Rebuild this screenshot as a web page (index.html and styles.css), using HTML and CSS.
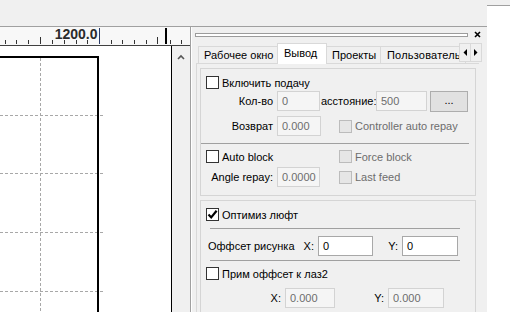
FILE: index.html
```html
<!DOCTYPE html>
<html lang="ru">
<head>
  <meta charset="UTF-8">
  <title>Вывод</title>
  <link rel="stylesheet" href="styles.css">
</head>
<body>
  <div class="screen">
    <div class="app">
      <div class="topbar"></div>
      <div class="main">
        <!-- drawing area with ruler -->
        <div class="work">
          <div class="ruler">
            <svg width="190" height="18" viewBox="0 0 190 18">
              <g stroke="#333" stroke-width="1">
                <line x1="5.5" y1="13" x2="5.5" y2="17"/>
                <line x1="16.5" y1="13" x2="16.5" y2="17"/>
                <line x1="28.5" y1="13" x2="28.5" y2="17"/>
                <line x1="40.5" y1="10" x2="40.5" y2="17"/>
                <line x1="52.5" y1="13" x2="52.5" y2="17"/>
                <line x1="64.5" y1="13" x2="64.5" y2="17"/>
                <line x1="76.5" y1="13" x2="76.5" y2="17"/>
                <line x1="87.5" y1="13" x2="87.5" y2="17"/>
                <line x1="99.5" y1="1" x2="99.5" y2="17" stroke="#2a3a66"/>
                <line x1="111.5" y1="13" x2="111.5" y2="17"/>
                <line x1="122.5" y1="13" x2="122.5" y2="17"/>
                <line x1="134.5" y1="13" x2="134.5" y2="17"/>
                <line x1="146.5" y1="13" x2="146.5" y2="17"/>
                <line x1="157.5" y1="10" x2="157.5" y2="17"/>
                <line x1="170.5" y1="13" x2="170.5" y2="17"/>
                <line x1="181.5" y1="13" x2="181.5" y2="17"/>
              </g>
              <line x1="166" y1="1" x2="166" y2="17" stroke="#000" stroke-width="2"/>
              <text x="97.5" y="11.5" text-anchor="end" class="ruler-label">1200.0</text>
            </svg>
          </div>
          <div class="view">
            <div class="canvas">
              <svg width="171" height="266" viewBox="0 0 171 266">
                <g stroke="#a8a8a8" stroke-width="1" stroke-dasharray="3 2">
                  <line x1="40.5" y1="12" x2="40.5" y2="266"/>
                  <line x1="0" y1="69.5" x2="104" y2="69.5"/>
                  <line x1="0" y1="127.5" x2="104" y2="127.5"/>
                  <line x1="0" y1="186.5" x2="104" y2="186.5"/>
                  <line x1="0" y1="245.5" x2="104" y2="245.5"/>
                </g>
                <polyline points="0,11 98,11 98,266" fill="none" stroke="#000" stroke-width="2"/>
              </svg>
            </div>
            <div class="vscroll">
              <svg width="18" height="18" viewBox="0 0 18 18">
                <polyline points="6,11 9,8 12,11" fill="none" stroke="#555" stroke-width="1.6"/>
              </svg>
            </div>
          </div>
        </div>

        <!-- docked settings panel -->
        <div class="dock">
          <div class="dock-title">
            <div class="gripper"></div>
            <svg class="close" width="7" height="7" viewBox="0 0 7 7">
              <path d="M1 1 L6 6 M6 1 L1 6" stroke="#000" stroke-width="1.6"/>
            </svg>
          </div>

          <div class="tabs">
            <div class="tab tab-work">Рабочее окно</div>
            <div class="tab tab-active">Вывод</div>
            <div class="tab tab-proj">Проекты</div>
            <div class="tab tab-user">Пользователь</div>
            <div class="tab-arrows">
              <div class="arrow-btn">
                <svg width="4" height="7" viewBox="0 0 4 7"><path d="M4 0 L0.5 3.5 L4 7 Z" fill="#000"/></svg>
              </div>
              <div class="arrow-btn">
                <svg width="4" height="7" viewBox="0 0 4 7"><path d="M0 0 L3.5 3.5 L0 7 Z" fill="#000"/></svg>
              </div>
            </div>
          </div>

          <div class="pane">
            <div class="group group-feed">
              <div class="row row-check">
                <span class="check"></span>
                <span class="check-label">Включить подачу</span>
              </div>
              <div class="row row-field">
                <span class="label">Кол-во</span>
                <span class="input input-off w43">0</span>
                <span class="label-inline">асстояние:</span>
                <span class="input input-off w51">500</span>
                <span class="btn">...</span>
              </div>
              <div class="row row-field row-gap">
                <span class="label">Возврат</span>
                <span class="input input-off w44">0.000</span>
                <span class="check check-off ml18"></span>
                <span class="check-label off">Controller auto repay</span>
              </div>
              <div class="sep sep-wide"></div>
              <div class="row row-check row-after-sep">
                <span class="check-cell">
                  <span class="check"></span>
                  <span class="check-label">Auto block</span>
                </span>
                <span class="check check-off"></span>
                <span class="check-label off">Force block</span>
              </div>
              <div class="row row-field row-last">
                <span class="label">Angle repay:</span>
                <span class="input input-off w43">0.0000</span>
                <span class="check check-off ml19"></span>
                <span class="check-label off">Last feed</span>
              </div>
            </div>

            <div class="group group-offset">
              <div class="row row-check">
                <span class="check on">
                  <svg width="11" height="11" viewBox="0 0 11 11"><path d="M1.5 5.5 L4.2 8.4 L9.6 1.8" fill="none" stroke="#000" stroke-width="2.2"/></svg>
                </span>
                <span class="check-label">Оптимиз люфт</span>
              </div>
              <div class="sep sep-short"></div>
              <div class="row row-offset">
                <span class="offset-label"><span>Оффсет рисунка</span><span>X:</span></span>
                <span class="input w55">0</span>
                <span class="axis axis-y">Y:</span>
                <span class="input w56">0</span>
              </div>
              <div class="sep sep-short sep-tight"></div>
              <div class="row row-check row-after-sep">
                <span class="check"></span>
                <span class="check-label">Прим оффсет к лаз2</span>
              </div>
              <div class="row row-laser">
                <span class="axis axis-x2">X:</span>
                <span class="input input-off w50">0.000</span>
                <span class="axis axis-y2">Y:</span>
                <span class="input input-off w56">0.000</span>
              </div>
            </div>
          </div>
        </div>
      </div>
    </div>
    <div class="side"></div>
  </div>
</body>
</html>
```

FILE: styles.css
```css
body {
  margin: 0;
  padding: 0;
  background-color: #f0f0f0;
  font-family: 'Liberation Sans', Arial, sans-serif;
  font-size: 11px;
  color: #000000;
}

.screen {
  display: flex;
  width: 510px;
  height: 312px;
  overflow: hidden;
}

.app {
  width: 487px;
  display: flex;
  flex-direction: column;
}

.side {
  width: 23px;
  margin-top: 5px;
  background-color: #ffffff;
  border-top: 1px solid #a0a0a0;
}

.topbar {
  height: 26px;
  flex-shrink: 0;
}

.main {
  flex: 1;
  display: flex;
  border-top: 1px solid #a0a0a0;
  min-height: 0;
}

/* Work area */
.work {
  width: 190px;
  border-right: 1px solid #a0a0a0;
  display: flex;
  flex-direction: column;
}

.ruler {
  height: 18px;
  flex-shrink: 0;
  background-color: #f8f8f8;
  border-bottom: 1px solid #404040;
}

.ruler svg {
  display: block;
}

.ruler-label {
  font-family: 'Liberation Sans', Arial, sans-serif;
  font-weight: bold;
  font-size: 14px;
  fill: #2b2b2b;
}

.view {
  flex: 1;
  display: flex;
  min-height: 0;
}

.canvas {
  width: 171px;
  background-color: #ffffff;
  border-right: 1px solid #000000;
  overflow: hidden;
}

.canvas svg,
.vscroll svg {
  display: block;
}

.vscroll {
  width: 18px;
  background-color: #f0f0f0;
  padding-top: 2px;
}

/* Dock panel */
.dock {
  width: 295px;
  border-left: 1px solid #ffffff;
  display: flex;
  flex-direction: column;
  min-height: 0;
}

.dock-title {
  height: 15px;
  flex-shrink: 0;
  display: flex;
  align-items: center;
  padding: 0 6px 0 3px;
}

.gripper {
  flex: 1;
  height: 2px;
  background-color: #ffffff;
  border: 1px solid #9c9c9c;
  margin-right: 6px;
}

.close {
  display: block;
}

.tabs {
  height: 21px;
  flex-shrink: 0;
  display: flex;
  align-items: flex-end;
  padding-left: 6px;
}

.tab {
  box-sizing: border-box;
  height: 17px;
  border: 1px solid #d9d9d9;
  border-bottom: none;
  background-color: #f0f0f0;
  margin-right: -1px;
  padding: 0 5px;
  line-height: 16px;
  white-space: nowrap;
  overflow: hidden;
}

.tab-work {
  width: 80px;
}

.tab-active {
  width: 50px;
  height: 21px;
  background-color: #ffffff;
  line-height: 18px;
  position: relative;
  z-index: 1;
  margin-bottom: -1px;
  padding: 0 6px;
}

.tab-proj {
  width: 55px;
}

.tab-user {
  width: 86px;
  padding-left: 6px;
  letter-spacing: 0.2px;
}

/* scroll buttons sit over the end of the last tab */
.tab-arrows {
  display: flex;
  position: relative;
  z-index: 2;
  margin-left: -6px;
  margin-bottom: 1px;
  height: 17px;
  border: 1px solid #d9d9d9;
  background-color: #f0f0f0;
}

.arrow-btn {
  width: 10px;
  display: flex;
  align-items: center;
  justify-content: center;
}

.arrow-btn + .arrow-btn {
  border-left: 1px solid #d9d9d9;
}

.pane {
  flex: 1;
  min-height: 0;
  overflow: hidden;
  box-sizing: border-box;
  margin-left: 4px;
  width: 283px;
  border: 1px solid #d9d9d9;
  border-right: none;
  border-bottom: none;
  padding: 4px 3px 0 3px;
}

.group {
  border: 1px solid #d5d5d5;
}

.group-feed {
  padding-bottom: 8px;
}

.group-offset {
  margin-top: 4px;
  height: 120px;
}

.row {
  display: flex;
  align-items: center;
}

.row-check {
  height: 13px;
  margin-top: 7px;
  padding-left: 5px;
}

.row-after-sep {
  margin-top: 6px;
}

.row-field {
  height: 20px;
  margin-top: 2px;
}

.row-gap {
  margin-top: 5px;
}

.row-last {
  margin-top: 4px;
}

.check {
  box-sizing: border-box;
  width: 13px;
  height: 13px;
  border: 1px solid #333333;
  background-color: #ffffff;
  display: flex;
  align-items: center;
  justify-content: center;
  flex-shrink: 0;
}

.check-off {
  border-color: #bcbcbc;
  background-color: #e6e6e6;
}

.check-label {
  margin-left: 3px;
  white-space: nowrap;
}

.check-label.off {
  color: #6d6d6d;
}

.check-cell {
  width: 133px;
  display: flex;
  align-items: center;
}

.ml18 {
  margin-left: 18px;
}

.ml19 {
  margin-left: 19px;
}

.label {
  width: 72px;
  text-align: right;
  margin-right: 4px;
  white-space: nowrap;
}

.label-inline {
  width: 56px;
  padding-left: 1px;
  box-sizing: border-box;
  white-space: nowrap;
}

.input {
  box-sizing: border-box;
  height: 20px;
  border: 1px solid #a8a8a8;
  background-color: #ffffff;
  padding-left: 4px;
  line-height: 18px;
}

.input-off {
  border-color: #d3d3d3;
  background-color: #f5f5f5;
  color: #6d6d6d;
}

.w43 { width: 43px; }
.w44 { width: 44px; }
.w50 { width: 50px; }
.w51 { width: 51px; }
.w55 { width: 55px; }
.w56 { width: 56px; }

.btn {
  box-sizing: border-box;
  width: 38px;
  height: 21px;
  margin-left: 3px;
  border: 1px solid #adadad;
  background-color: #e1e1e1;
  text-align: center;
  line-height: 17px;
}

.sep {
  height: 1px;
  background-color: #a0a0a0;
}

.sep-wide {
  margin: 7px 6px 0 0;
}

.sep-short {
  margin: 7px 15px 0 9px;
}

.sep-tight {
  margin-top: 4px;
}

.row-offset {
  height: 20px;
  margin-top: 7px;
  padding-left: 7px;
}

.offset-label {
  width: 106px;
  margin-right: 4px;
  display: flex;
  justify-content: space-between;
  white-space: nowrap;
}

.axis {
  text-align: right;
  white-space: nowrap;
}

.axis-y {
  width: 25px;
  margin-right: 4px;
}

.row-laser {
  height: 20px;
  margin-top: 8px;
}

.axis-x2 {
  width: 80px;
  margin-right: 4px;
}

.axis-y2 {
  width: 49px;
  margin-right: 4px;
}
```
